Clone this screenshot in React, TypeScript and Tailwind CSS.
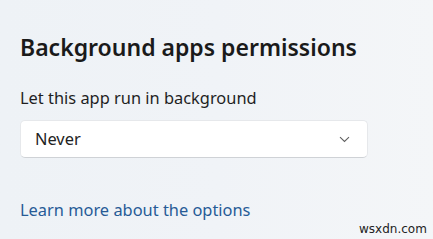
export default function App() {
  return (
    <div
      className="relative w-[433px] h-[239px] overflow-hidden bg-gradient-to-r from-[#eef2f6] via-[#f0f3f7] to-[#f4f6f8]"
      style={{ fontFamily: '"Noto Sans", "Open Sans", sans-serif' }}
    >
      <div className="flex flex-col pl-[20px] pt-[32px]">
        <h1 className="text-[23px] leading-[30px] font-semibold text-[#1a1a1a]">
          Background apps permissions
        </h1>
        <p className="mt-[25px] text-[16.4px] leading-[22px] text-[#1f1f1f]">
          Let this app run in background
        </p>
        <div className="mt-[11px] w-[348px] h-[38px] rounded-[5px] bg-white border border-[#e6e8eb] border-b-[#cfd2d6] flex items-center justify-between pl-[14px] pr-[17px]">
          <span className="text-[16.4px] text-[#222]">Never</span>
          <svg width="11" height="7" viewBox="0 0 11 7" fill="none">
            <path d="M1 1.2 L5.5 5.5 L10 1.2" stroke="#606060" strokeWidth="1.1" />
          </svg>
        </div>
        <a className="mt-[41px] text-[16.4px] leading-[22px] text-[#275b96]">
          Learn more about the options
        </a>
      </div>
      <div className="absolute left-[359px] top-[220px] text-[12px] text-[#222]" style={{ fontFamily: '"DejaVu Sans", sans-serif' }}>
        wsxdn.com
      </div>
    </div>
  );
}
